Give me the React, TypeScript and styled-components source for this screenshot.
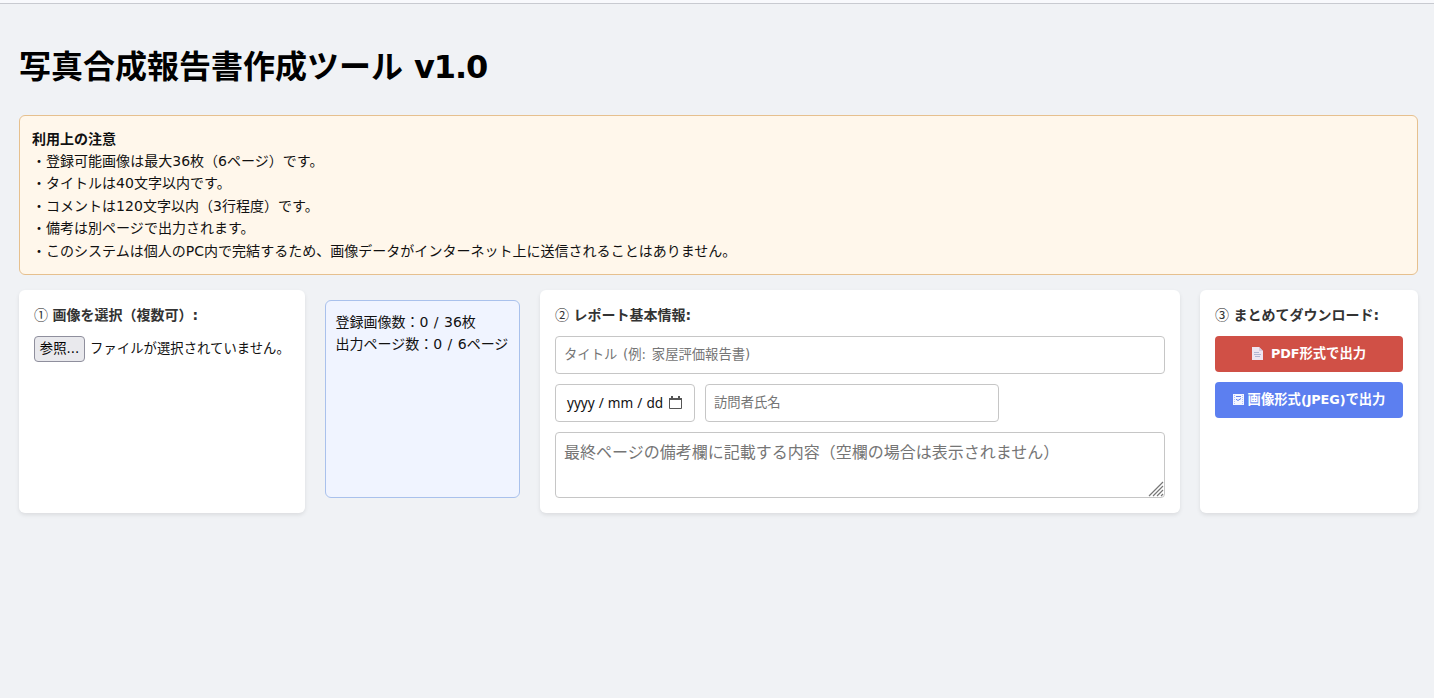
import React from "react";
import styled, { createGlobalStyle, css } from "styled-components";

const GlobalStyle = createGlobalStyle`
  * { box-sizing: border-box; }
  body {
    margin: 0;
    background: #f0f2f5;
    color: #111;
    font-family: "DejaVu Sans", "Noto Sans CJK JP", sans-serif;
    font-size: 14px;
  }
`;

const Page = styled.div`
  min-height: 698px;
  border-top: 3px solid #f8f9fc;
`;

const Main = styled.main`
  border-top: 1px solid #c8cad0;
  padding: 39px 16px 0 19px;
`;

const Title = styled.h1`
  margin: 0 0 24px;
  height: 48px;
  line-height: 48px;
  font-size: 32px;
  font-weight: 700;
  color: #000;
  white-space: nowrap;
`;

const Version = styled.span`
  letter-spacing: -1.1px;
  word-spacing: 1px;
`;

const Notice = styled.section`
  height: 160px;
  padding: 11.6px 12px;
  border: 1px solid #e6c08e;
  border-radius: 6px;
  background: #fff7eb;
  line-height: 22.4px;
  white-space: nowrap;
`;

const NoticeLine = styled.div<{ $strong?: boolean }>`
  height: 22.4px;
  font-weight: ${(p) => (p.$strong ? 700 : 400)};
  letter-spacing: ${(p) => (p.$strong ? 0 : 0.02)}px;
`;

const Panels = styled.div`
  display: grid;
  grid-template-columns: 286px 195px 640px 218px;
  gap: 20px;
  height: 223px;
  margin-top: 15px;
`;

const Card = styled.section`
  display: flex;
  flex-direction: column;
  gap: 10px;
  padding: 15px;
  border-radius: 6px;
  background: #fff;
  box-shadow: 0 2px 4px rgba(0, 0, 0, 0.09);
`;

const CardTitle = styled.h2`
  margin: 0;
  height: 21px;
  line-height: 19px;
  font-size: 14px;
  font-weight: 700;
  color: #333;
  white-space: nowrap;
`;

const Circled = styled.span`
  font-family: "Noto Sans CJK JP", sans-serif;
  font-weight: 400;
  margin-right: 4.5px;
`;

const FileRow = styled.div`
  display: flex;
  align-items: center;
  gap: 5px;
  height: 26px;
  font-size: 13.33px;
  white-space: nowrap;
`;

const FileName = styled.span`
  padding-bottom: 3px;
  letter-spacing: 0.05px;
`;

const BrowseButton = styled.button`
  width: 51px;
  height: 26px;
  padding: 0;
  border: 1px solid #8f8f9d;
  border-radius: 4px;
  background: #e9e9ed;
  color: #000;
  font: inherit;
  line-height: 24px;
`;

const Status = styled.section`
  margin: 10px 0 15px;
  padding: 10px 9.5px;
  border: 1px solid #a9c1ec;
  border-radius: 6px;
  background: #f0f4ff;
  line-height: 22.4px;
  word-spacing: 1px;
  white-space: nowrap;
`;

const field = css`
  border: 1px solid #c6c6c6;
  border-radius: 4px;
  background: #fff;
  font-family: "Noto Sans", "Noto Sans CJK JP", sans-serif;
  font-size: 13.33px;
  outline: none;
  &::placeholder { color: #757575; opacity: 1; }
`;

const TextInput = styled.input<{ $width: number }>`
  ${field}
  font-family: "DejaVu Sans", "Noto Sans CJK JP", sans-serif;
  width: ${(p) => p.$width}px;
  height: 38px;
  padding: 0 8px 2px;
  word-spacing: 1.5px;
`;

const FieldRow = styled.div`
  display: flex;
  gap: 10px;
`;

const DateField = styled.div`
  ${field}
  display: flex;
  align-items: center;
  justify-content: space-between;
  width: 140px;
  height: 38px;
  padding: 0 12px 2px 11px;
  font-size: 13.6px;
  word-spacing: 0.5px;
  white-space: nowrap;
  color: #111;
`;

const NoteWrap = styled.div`
  position: relative;
  height: 66px;
`;

const NoteArea = styled.textarea`
  ${field}
  display: block;
  width: 610px;
  height: 66px;
  padding: 7px 8px;
  font-size: 16px;
  line-height: 24px;
  resize: none;
`;

const Grip = styled.svg`
  position: absolute;
  right: 1px;
  bottom: 1px;
`;

const ExportButton = styled.button<{ $color: string; $gap: number }>`
  display: flex;
  align-items: center;
  justify-content: center;
  gap: ${(p) => p.$gap}px;
  height: 36px;
  padding: 0 0 1px;
  border: 0;
  border-radius: 4px;
  background: ${(p) => p.$color};
  color: #fff;
  font-family: inherit;
  font-size: 13.33px;
  font-weight: 700;
  white-space: nowrap;
`;

const ButtonText = styled.span`
  padding-bottom: 2px;
`;

const Latin = styled.span`
  font-size: 12.8px;
  letter-spacing: -0.1px;
`;

const CalendarIcon = () => (
  <svg width="13" height="13" viewBox="0 0 13 13" fill="none">
    <path d="M.5 2.5h12v10H.5z" stroke="#555" />
    <path d="M0 2h13v2H0zM2 0h2v2H2zM9 0h2v2H9z" fill="#555" />
  </svg>
);

const DocumentIcon = () => (
  <svg width="11" height="13" viewBox="0 0 11 13">
    <path d="M0 0h7l4 4v9H0z" fill="#eee5f1" />
    <path d="M7 0v4h4" fill="#d5cce2" />
    <path d="M2 5.5h5M2 7.5h7M3 9.5h5" stroke="#b3b5d2" />
  </svg>
);

const PictureIcon = () => (
  <svg width="11" height="11" viewBox="0 0 11 11">
    <path d="M0 0h11v11H0z" fill="#f4f6ff" />
    <path d="M1.5 1v9M9.5 1v9" stroke="#b3c2f8" strokeDasharray="1 1" />
    <path d="M3 2.5h5M3 5.2l2 1.3 3-2" stroke="#6682ef" fill="none" />
  </svg>
);

export default function App() {
  return (
    <Page>
      <GlobalStyle />
      <Main>
        <Title>
          写真合成報告書作成ツール<Version> v1.0</Version>
        </Title>
        <Notice>
          <NoticeLine $strong>利用上の注意</NoticeLine>
          <NoticeLine>・登録可能画像は最大36枚（6ページ）です。</NoticeLine>
          <NoticeLine>・タイトルは40文字以内です。</NoticeLine>
          <NoticeLine>・コメントは120文字以内（3行程度）です。</NoticeLine>
          <NoticeLine>・備考は別ページで出力されます。</NoticeLine>
          <NoticeLine>
            ・このシステムは個人のPC内で完結するため、画像データがインターネット上に送信されることはありません。
          </NoticeLine>
        </Notice>
        <Panels>
          <Card>
            <CardTitle>
              <Circled>①</Circled>画像を選択（複数可）:
            </CardTitle>
            <FileRow>
              <BrowseButton>参照...</BrowseButton>
              <FileName>ファイルが選択されていません。</FileName>
            </FileRow>
          </Card>
          <Status>
            <div>登録画像数：0 / 36枚</div>
            <div>出力ページ数：0 / 6ページ</div>
          </Status>
          <Card>
            <CardTitle>
              <Circled>②</Circled>レポート基本情報:
            </CardTitle>
            <TextInput $width={610} placeholder="タイトル (例: 家屋評価報告書)" />
            <FieldRow>
              <DateField>
                <span>yyyy / mm / dd</span>
                <CalendarIcon />
              </DateField>
              <TextInput $width={294} placeholder="訪問者氏名" />
            </FieldRow>
            <NoteWrap>
              <NoteArea placeholder="最終ページの備考欄に記載する内容（空欄の場合は表示されません）" />
              <Grip width="16" height="16" viewBox="0 0 16 16">
                <path d="M1 15L15 1M5 15L15 5M9 15l6-6M13 15l2-2" stroke="#777" strokeWidth="1.2" />
              </Grip>
            </NoteWrap>
          </Card>
          <Card>
            <CardTitle>
              <Circled>③</Circled>まとめてダウンロード:
            </CardTitle>
            <ExportButton $color="#d05046" $gap={8}>
              <DocumentIcon />
              <ButtonText><Latin>PDF</Latin>形式で出力</ButtonText>
            </ExportButton>
            <ExportButton $color="#5c7ff0" $gap={4}>
              <PictureIcon />
              <ButtonText>画像形式<Latin>(JPEG)</Latin>で出力</ButtonText>
            </ExportButton>
          </Card>
        </Panels>
      </Main>
    </Page>
  );
}
